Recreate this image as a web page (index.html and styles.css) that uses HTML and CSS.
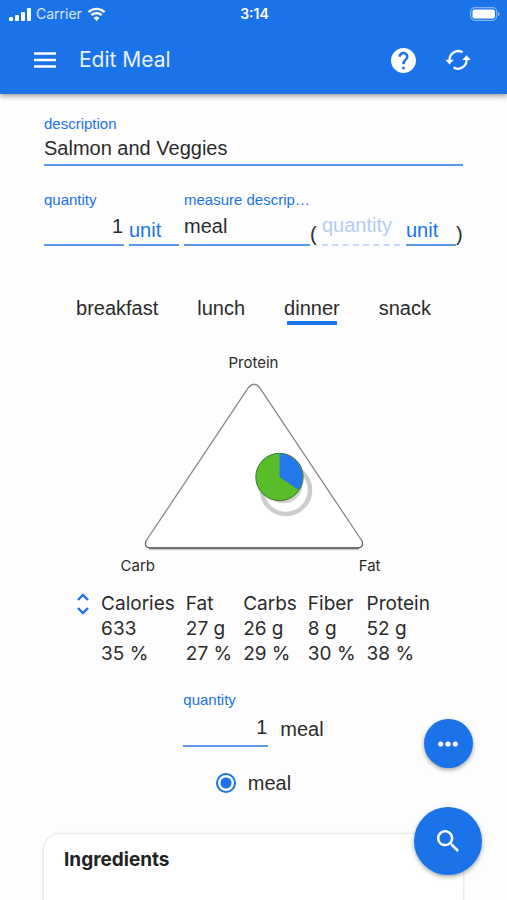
FILE: index.html
```
<!DOCTYPE html>
<html lang="en">
<head>
    <meta charset="UTF-8">
    <meta name="viewport" content="width=device-width, initial-scale=1.0">
    <title>Edit Meal</title>
    <link rel="stylesheet" href="styles.css">
</head>
<body>
    <header class="app-header">
        <div class="status-bar">
            <div class="status-left">
                <svg class="signal-icon" viewBox="0 0 22 13" aria-hidden="true">
                    <rect x="0" y="9" width="4" height="4" rx="1"/>
                    <rect x="6" y="7" width="4" height="6" rx="1"/>
                    <rect x="12" y="4" width="4" height="9" rx="1"/>
                    <rect x="18" y="0" width="4" height="13" rx="1"/>
                </svg>
                <span>Carrier</span>
                <svg class="wifi-icon" viewBox="0 0 19 14" aria-hidden="true">
                    <path d="M1.500 5.200a11.400 11.400 0 0 1 16 0M4.400 8.200a7.200 7.200 0 0 1 10.200 0" fill="none" stroke="currentColor" stroke-width="2.400"/>
                    <path d="M9.500 14l-3-3.100a4.300 4.300 0 0 1 6 0z"/>
                </svg>
            </div>
            <div class="status-time">3:14</div>
            <div class="status-right">
                <svg class="battery-icon" viewBox="0 0 30 14" aria-hidden="true">
                    <rect x=".7" y=".7" width="26" height="12.600" rx="4" fill="none" stroke="currentColor" stroke-opacity=".45" stroke-width="1.200"/>
                    <rect x="2.500" y="2.500" width="22.400" height="9" rx="2"/>
                    <path d="M28 4.800c2.200.8 2.200 3.600 0 4.400z" opacity=".5"/>
                </svg>
            </div>
        </div>
        <div class="toolbar">
            <button type="button" class="icon-button" aria-label="Menu">
                <svg class="menu-icon" viewBox="0 0 22 16"><path d="M0 1.500h22M0 8h22M0 14.500h22" stroke="currentColor" stroke-width="2.400"/></svg>
            </button>
            <h1>Edit Meal</h1>
            <button type="button" class="icon-button" aria-label="Help">
                <svg class="help-icon" viewBox="2 2 20 20"><path d="M12 2C6.480 2 2 6.480 2 12s4.480 10 10 10 10-4.480 10-10S17.520 2 12 2zm1 17h-2v-2h2v2zm2.070-7.750l-.9.920C13.450 12.900 13 13.500 13 15h-2v-.5c0-1.100.45-2.100 1.170-2.830l1.240-1.260c.37-.36.590-.86.590-1.410 0-1.100-.9-2-2-2s-2 .9-2 2H8c0-2.210 1.790-4 4-4s4 1.790 4 4c0 .88-.36 1.680-.93 2.250z"/></svg>
            </button>
            <button type="button" class="icon-button" aria-label="Sync">
                <svg class="sync-icon" viewBox="0 0 26 22">
                    <path d="M17.600 3.300A8.700 8.700 0 0 0 4.600 11.600M8.600 18.600A8.700 8.700 0 0 0 21.500 10.400" fill="none" stroke="currentColor" stroke-width="2.300"/>
                    <path d="M.3 10.800h8.400l-4.200 4.600zM17.300 11h8.400l-4.200-4.800z"/>
                </svg>
            </button>
        </div>
    </header>

    <main class="content">
        <form class="meal-form">
            <div class="field">
                <label for="description">description</label>
                <input id="description" type="text" value="Salmon and Veggies">
            </div>

            <div class="measure-row">
                <div class="field field-quantity">
                    <label for="quantity">quantity</label>
                    <input id="quantity" class="number" type="text" inputmode="decimal" value="1">
                </div>
                <button type="button" class="unit-button">unit</button>
                <div class="field field-measure">
                    <label for="measure">measure description</label>
                    <input id="measure" type="text" value="meal">
                </div>
                <div class="equivalent">
                    <span class="paren">(</span>
                    <input class="equivalent-quantity" type="text" placeholder="quantity" aria-label="equivalent quantity">
                    <button type="button" class="unit-button">unit</button>
                    <span class="paren">)</span>
                </div>
            </div>

            <div class="meal-tabs" role="tablist">
                <button type="button" role="tab" class="meal-tab">breakfast</button>
                <button type="button" role="tab" class="meal-tab">lunch</button>
                <button type="button" role="tab" class="meal-tab active" aria-selected="true">dinner</button>
                <button type="button" role="tab" class="meal-tab">snack</button>
            </div>

            <div class="macro-chart">
                <div class="macro-top">Protein</div>
                <svg class="macro-triangle" viewBox="0 0 222 170" aria-hidden="true">
                    <defs>
                        <linearGradient id="edge" x1="0" y1="0" x2="0" y2="1">
                            <stop offset="0" stop-color="#888"/>
                            <stop offset=".94" stop-color="#888"/>
                            <stop offset="1" stop-color="#444"/>
                        </linearGradient>
                    </defs>
                    <path d="M6 168.300H216" stroke="#ccc" stroke-width="2"/>
                    <path d="M105.500 6.500Q111 0 116.500 6.500L219 160Q221 166.500 215 167H7Q1 166.500 3 160Z" fill="#fff" stroke="url(#edge)" stroke-width="1.300"/>
                    <circle cx="143" cy="109" r="24" fill="none" stroke="#ccc" stroke-width="4.500"/>
                    <circle cx="141" cy="104" r="16" fill="none" stroke="#d2d2d2" stroke-width="4.500"/>
                    <circle cx="136.500" cy="96" r="23.700" fill="#58bd28" stroke="#43743a"/>
                    <path d="M136.500 96V72.800A23.200 23.200 0 0 1 155.700 109Z" fill="#2378ea"/>
                </svg>
                <div class="macro-bottom">
                    <span>Carb</span>
                    <span>Fat</span>
                </div>
            </div>

            <div class="nutrition">
                <button type="button" class="expand-button" aria-label="Expand nutrition">
                    <svg viewBox="0 0 12 22"><path d="M1 7l5-5 5 5M1 15l5 5 5-5" fill="none" stroke="currentColor" stroke-width="2.400"/></svg>
                </button>
                <table>
                    <thead>
                        <tr><th>Calories</th><th>Fat</th><th>Carbs</th><th>Fiber</th><th>Protein</th></tr>
                    </thead>
                    <tbody>
                        <tr><td>633</td><td>27 g</td><td>26 g</td><td>8 g</td><td>52 g</td></tr>
                        <tr><td>35 %</td><td>27 %</td><td>29 %</td><td>30 %</td><td>38 %</td></tr>
                    </tbody>
                </table>
            </div>

            <div class="serving">
                <div class="field field-serving">
                    <label for="serving">quantity</label>
                    <input id="serving" class="number" type="text" inputmode="decimal" value="1">
                </div>
                <span class="serving-unit">meal</span>
            </div>

            <label class="serving-option">
                <input type="radio" name="serving-unit" checked>
                <span>meal</span>
            </label>
        </form>

        <section class="card">
            <h2>Ingredients</h2>
        </section>
    </main>

    <div class="fabs">
        <button type="button" class="fab fab-small" aria-label="More">
            <svg viewBox="0 0 20 6"><circle cx="2.700" cy="3" r="2.600"/><circle cx="10" cy="3" r="2.600"/><circle cx="17.300" cy="3" r="2.600"/></svg>
        </button>
        <button type="button" class="fab" aria-label="Search">
            <svg viewBox="3 3 17.500 17.500"><path d="M15.500 14h-.79l-.28-.27C15.410 12.590 16 11.110 16 9.500 16 5.910 13.090 3 9.500 3S3 5.910 3 9.500 5.910 16 9.500 16c1.610 0 3.090-.59 4.230-1.570l.27.280v.790l5 4.990L20.490 19l-4.990-5zm-6 0C7.010 14 5 11.990 5 9.500S7.010 5 9.500 5 14 7.010 14 9.500 11.990 14 9.500 14z"/></svg>
        </button>
    </div>
</body>
</html>
```
FILE: styles.css
```
:root {
    --primary-color: #1a73e8;
    --line-color: #5c98e6;
    --text-color: #2b2b2b;
    --page-color: #fdfdfd;
    --field-font: "Liberation Sans", Arial, sans-serif;
    --ui-font: Inter, Roboto, sans-serif;
}

* {
    box-sizing: border-box;
}

body {
    margin: 0;
    height: 100vh;
    display: flex;
    flex-direction: column;
    background: var(--page-color);
    color: var(--text-color);
    font-family: var(--field-font);
    font-size: 20px;
    line-height: 24px;
}

button,
input {
    font: inherit;
    color: inherit;
    background: none;
    border: none;
    border-radius: 0;
    margin: 0;
    padding: 0;
    outline: none;
}

button {
    cursor: pointer;
}

svg {
    display: block;
    fill: currentColor;
}

/* Header */
.app-header {
    flex: none;
    position: relative;
    background: var(--primary-color);
    color: #fff;
    box-shadow: 0 2px 5px rgba(0, 0, 0, 0.4);
    font-family: var(--ui-font);
}

.status-bar {
    display: grid;
    grid-template-columns: 1fr auto 1fr;
    align-items: center;
    height: 28px;
    padding: 0 7px 0 9px;
    font-size: 14px;
}

.status-left {
    display: flex;
    align-items: center;
    gap: 5px;
    color: #dce9fc;
}

.status-time {
    font-weight: 600;
}

.status-right {
    justify-self: end;
}

.signal-icon {
    width: 22px;
    height: 13px;
    color: #fff;
}

.wifi-icon {
    width: 19px;
    height: 14px;
    color: #fff;
}

.battery-icon {
    width: 30px;
    height: 14px;
}

.toolbar {
    display: flex;
    align-items: center;
    height: 66px;
    padding: 0 36px 2px 33px;
}

.toolbar h1 {
    flex: 1;
    margin: 0 0 0 22px;
    font-size: 21px;
    font-weight: 400;
    color: #e8f1fd;
}

.icon-button {
    display: flex;
    align-items: center;
    justify-content: center;
    height: 40px;
}

.icon-button + .icon-button {
    margin-left: 29px;
}

.menu-icon {
    width: 24px;
    height: 16px;
}

.help-icon {
    width: 25px;
    height: 25px;
}

.sync-icon {
    width: 26px;
    height: 22px;
}

/* Form */
.content {
    flex: 1;
    min-height: 0;
    overflow-y: auto;
    scrollbar-width: none;
    padding: 21px 44px 0;
}

.meal-form {
    display: flex;
    flex-direction: column;
}

.field {
    display: flex;
    flex-direction: column;
    min-width: 0;
}

.field label {
    font-size: 15px;
    line-height: 18px;
    color: var(--primary-color);
    white-space: nowrap;
    overflow: hidden;
    text-overflow: ellipsis;
}

.field input {
    width: 100%;
    height: 33px;
    border-bottom: 2px solid var(--line-color);
}

.field .number {
    padding-right: 1px;
    text-align: right;
}

.measure-row {
    display: flex;
    align-items: flex-end;
    margin-top: 25px;
}

.measure-row input,
.unit-button {
    height: 37px;
}

.field-quantity {
    flex: 0 0 80px;
    margin-right: 5px;
}

.field-measure {
    flex: 1;
    margin-left: 5px;
}

.unit-button {
    flex: 0 0 50px;
    padding-top: 6px;
    text-align: left;
    color: var(--primary-color);
    border-bottom: 2px solid var(--line-color);
}

.equivalent {
    flex: 0 0 153px;
    min-width: 0;
    display: flex;
    align-items: flex-end;
}

.paren {
    flex: 0 0 7px;
}

.measure-row .equivalent-quantity {
    flex: 1;
    width: 0;
    min-width: 0;
    margin: 0 6px 0 5px;
    padding-bottom: 3px;
    border-bottom: 2px dashed #c6daf7;
}

.equivalent-quantity::placeholder {
    color: #b3cdf4;
    opacity: 1;
}

/* Meal tabs */
.meal-tabs {
    display: flex;
    justify-content: center;
    gap: 39px;
    margin-top: 50px;
}

.meal-tab::after {
    content: "";
    display: block;
    height: 4px;
    margin: 1px 3px 0;
}

.meal-tab.active::after {
    background: var(--primary-color);
}

/* Macro triangle */
.macro-chart {
    align-self: center;
    width: 266px;
    margin-top: 28px;
    font-family: var(--ui-font);
    font-size: 15px;
    line-height: 20px;
}

.macro-top {
    text-align: center;
}

.macro-triangle {
    width: 222px;
    height: 170px;
    margin: 8px auto 5px;
}

.macro-bottom {
    display: flex;
    justify-content: space-between;
    padding-right: 6px;
}

/* Nutrition summary */
.nutrition {
    display: flex;
    justify-content: center;
    align-items: flex-start;
    gap: 12px;
    margin-top: 15px;
    font-family: var(--ui-font);
    font-size: 19px;
    line-height: 25px;
}

.expand-button {
    width: 12px;
    height: 22px;
    margin-top: 2px;
    color: var(--primary-color);
}

.nutrition table {
    border-collapse: collapse;
}

.nutrition th,
.nutrition td {
    padding: 0 11px 0 0;
    font-weight: 400;
    text-align: left;
    white-space: nowrap;
}

.nutrition th:last-child,
.nutrition td:last-child {
    padding-right: 0;
}

/* Serving */
.serving {
    display: flex;
    justify-content: center;
    align-items: flex-end;
    gap: 12px;
    margin-top: 25px;
}

.field-serving {
    width: 85px;
}

.field-serving input {
    height: 38px;
}

.serving-unit {
    padding-bottom: 6px;
}

.serving-option {
    align-self: center;
    display: flex;
    align-items: center;
    gap: 12px;
    margin-top: 24px;
}

.serving-option input {
    appearance: none;
    width: 20px;
    height: 20px;
    border: 2px solid var(--primary-color);
    border-radius: 50%;
    background: radial-gradient(circle, var(--primary-color) 5px, transparent 6px);
}

/* Ingredients */
.card {
    min-height: 120px;
    margin-top: 39px;
    padding: 14px 20px;
    border-radius: 16px;
    background: #fff;
    box-shadow: 0 0 3px rgba(0, 0, 0, 0.2);
}

.card h2 {
    margin: 0;
    font-family: var(--ui-font);
    font-size: 19px;
    font-weight: 700;
    color: #222;
}

/* Floating buttons */
.fabs {
    position: fixed;
    right: 25px;
    bottom: 25px;
    display: flex;
    flex-direction: column;
    align-items: center;
    gap: 39px;
}

.fab {
    display: flex;
    align-items: center;
    justify-content: center;
    width: 68px;
    height: 68px;
    border-radius: 50%;
    background: var(--primary-color);
    color: #fff;
    box-shadow: 0 2px 4px rgba(0, 0, 0, 0.35);
}

.fab svg {
    width: 22px;
    height: 22px;
}

.fab-small {
    width: 49px;
    height: 49px;
}

.fab-small svg {
    width: 20px;
    height: 6px;
}
```
